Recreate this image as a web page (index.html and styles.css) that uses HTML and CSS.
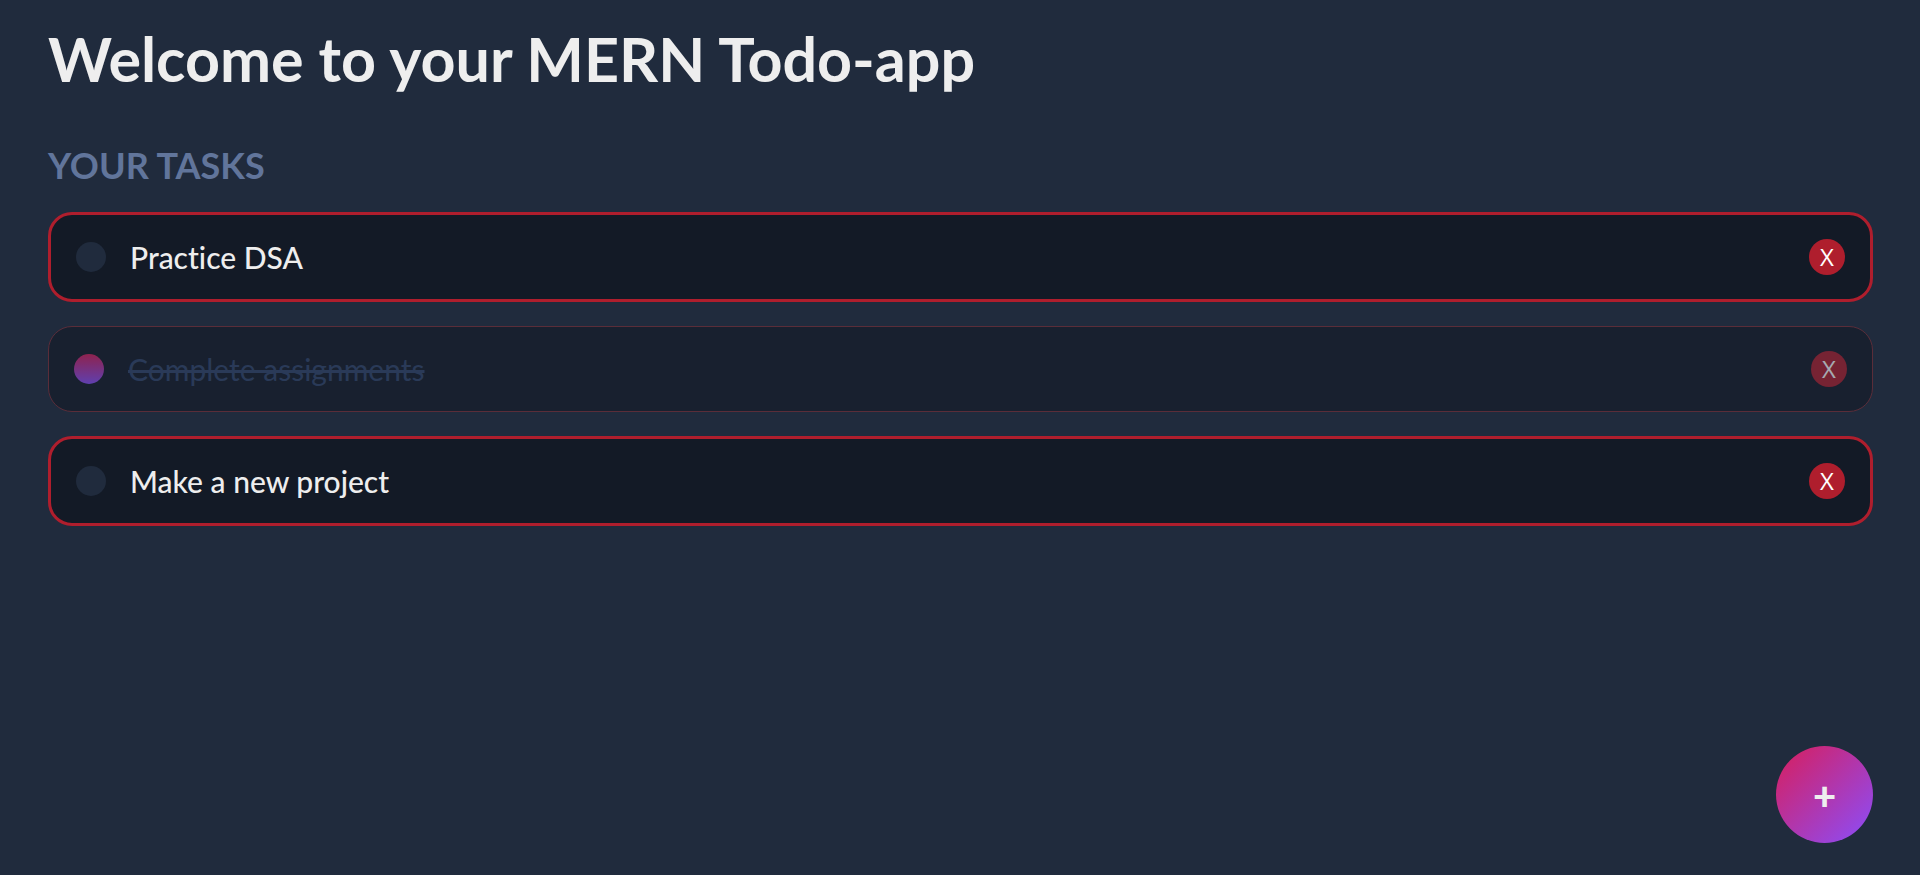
FILE: index.html
```html
<!DOCTYPE html>
<html lang="en">
<head>
<meta charset="utf-8">
<meta name="viewport" content="width=device-width, initial-scale=1">
<title>MERN Todo-app</title>
<link rel="stylesheet" href="styles.css">
</head>
<body>
<main class="app">
  <h1 class="title">Welcome to your MERN Todo-app</h1>
  <h2 class="subtitle">Your tasks</h2>
  <ul class="todos">
    <li class="todo">
      <label class="task">
        <input class="check" type="checkbox">
        <span class="text">Practice DSA</span>
      </label>
      <button class="delete" type="button" aria-label="Delete Practice DSA">X</button>
    </li>
    <li class="todo done">
      <label class="task">
        <input class="check" type="checkbox" checked>
        <span class="text">Complete assignments</span>
      </label>
      <button class="delete" type="button" aria-label="Delete Complete assignments">X</button>
    </li>
    <li class="todo">
      <label class="task">
        <input class="check" type="checkbox">
        <span class="text">Make a new project</span>
      </label>
      <button class="delete" type="button" aria-label="Delete Make a new project">X</button>
    </li>
  </ul>
</main>
<button class="add" type="button" aria-label="Add task">+</button>
</body>
</html>
```
FILE: styles.css
```css
:root {
  --primary: #d81e5b;
  --secondary: #8a4efc;
  --light: #eee;
  --dark: #131a26;
  --dark-alt: #202b3d;
  --danger: #af1e2d;
}

* {
  box-sizing: border-box;
  margin: 0;
  padding: 0;
}

body {
  min-height: 100vh;
  background: var(--dark-alt);
  color: var(--light);
  font-family: "Trebuchet MS", Lato, sans-serif;
  font-variant-ligatures: none;
}

.app {
  padding: 23px 47px 48px 48px;
}

.title {
  margin-bottom: 48px;
  font-size: 61px;
  line-height: 72px;
  font-weight: 700;
}

.subtitle {
  margin-bottom: 25px;
  color: #61759b;
  font-size: 36px;
  line-height: 44px;
  font-weight: 700;
  text-transform: uppercase;
}

.todos {
  display: flex;
  flex-direction: column;
  gap: 24px;
  list-style: none;
}

.todo {
  display: flex;
  align-items: center;
  padding: 24px 25px;
  border: 3px solid var(--danger);
  border-radius: 24px;
  background: var(--dark);
}

.task {
  display: flex;
  flex: 1;
  align-items: center;
  gap: 24px;
  cursor: pointer;
}

.check {
  appearance: none;
  width: 30px;
  height: 30px;
  border-radius: 50%;
  background: var(--dark-alt);
  cursor: pointer;
}

.check:checked {
  background: linear-gradient(to bottom, var(--primary), var(--secondary));
}

.text {
  font-size: 30px;
  line-height: 34px;
  font-weight: 500;
}

.delete {
  width: 36px;
  height: 36px;
  border: 0;
  border-radius: 50%;
  background: var(--danger);
  color: #fff;
  font-family: "Trebuchet MS", "Open Sans", sans-serif;
  font-size: 24px;
  line-height: 36px;
  cursor: pointer;
}

.done {
  border: 1px solid #822f38;
  opacity: 0.6;
}

.done .text {
  color: #31456b;
  font-weight: 400;
  text-decoration: line-through;
  text-decoration-thickness: 3px;
}

.add {
  position: fixed;
  right: 47px;
  bottom: 32px;
  width: 97px;
  height: 97px;
  border: 0;
  border-radius: 50%;
  background: linear-gradient(to bottom right, var(--primary), var(--secondary));
  color: var(--light);
  font: inherit;
  font-size: 40px;
  font-weight: 900;
  cursor: pointer;
}
```
